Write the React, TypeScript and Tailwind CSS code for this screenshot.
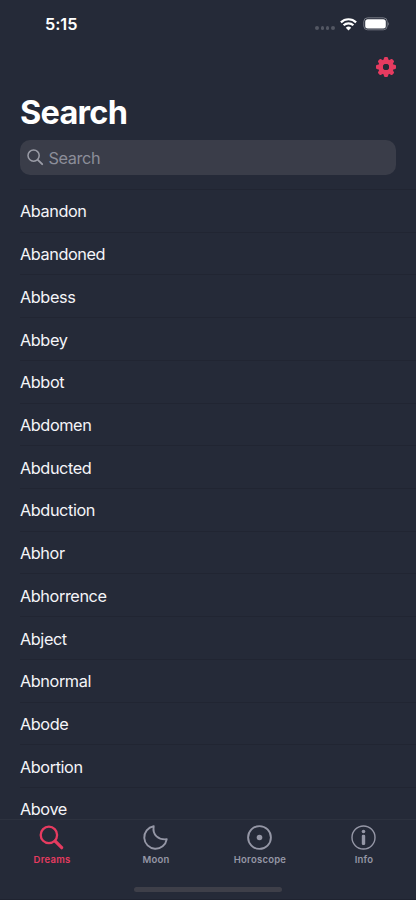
import React from "react";

const words = [
  "Abandon", "Abandoned", "Abbess", "Abbey", "Abbot", "Abdomen", "Abducted", "Abduction",
  "Abhor", "Abhorrence", "Abject", "Abnormal", "Abode", "Abortion", "Above",
];

function Gear() {
  return (
    <svg width="22" height="22" viewBox="-11 -11 22 22" fill="#e63b60">
      {[0, 45, 90, 135, 180, 225, 270, 315].map((a) => (
        <path key={a} transform={`rotate(${a})`} d="M-3 -6 L-1.9 -9.3 Q-1.7 -10 -1 -10 H1 Q1.7 -10 1.9 -9.3 L3 -6Z" />
      ))}
      <circle r="5.2" fill="none" stroke="#e63b60" strokeWidth="4.4" />
      <circle r="3" fill="#252a38" />
    </svg>
  );
}

function StatusBar() {
  return (
    <div className="flex h-12 shrink-0 items-center justify-between pl-[45px] pr-[26px]">
      <span className="text-[16.3px] font-semibold tracking-[-0.05px] text-white">5:15</span>
      <div className="flex items-center">
        <div className="mr-[5.5px] mt-2 flex gap-[1.6px]">
          {[0, 1, 2, 3].map((i) => (
            <i key={i} className="size-[3.6px] rounded-full bg-[#535763]" />
          ))}
        </div>
        <svg width="17" height="13" viewBox="0 0 17 13" fill="none" stroke="#fff" strokeWidth="2.2">
          <path d="M0.9 4.4 A10.8 10.8 0 0 1 16.1 4.4" />
          <path d="M3.6 7.3 A7 7 0 0 1 13.4 7.3" />
          <path d="M8.5 12.5 L5.8 9.8 A4 4 0 0 1 11.2 9.8Z" fill="#fff" stroke="none" />
        </svg>
        <svg className="ml-[6px]" width="27" height="14" viewBox="0 0 27 14">
          <rect x="0.8" y="0.8" width="23.4" height="12" rx="3.8" fill="none" stroke="#777b85" />
          <rect x="2.2" y="2.2" width="20.6" height="9.2" rx="2.5" fill="#fff" />
          <path d="M25.3 4.8 Q26.8 6.8 25.3 8.8Z" fill="#8b8e97" />
        </svg>
      </div>
    </div>
  );
}

function Tab({ label, active = false, children }: { label: string; active?: boolean; children: React.ReactNode }) {
  return (
    <div className={`flex flex-1 flex-col items-center ${active ? "text-[#e63b60]" : "text-[#9597a6]"}`}>
      <svg className="mr-[1px] mt-[4px]" width="28" height="28" viewBox="-13.5 -13.5 28 28" fill="none" stroke="currentColor" strokeWidth="1.9">
        {children}
      </svg>
      <span className="mt-[2px] text-[9.5px] font-semibold leading-[12px] tracking-[0.24px]">{label}</span>
    </div>
  );
}

export default function App() {
  return (
    <div className="flex h-[900px] w-[416px] flex-col overflow-hidden border-b border-[#1f2330] bg-[#252a38] font-[Inter,sans-serif]">
      <StatusBar />
      <div className="flex h-[38px] shrink-0 items-center justify-end pr-[19.5px]">
        <Gear />
      </div>
      <h1 className="h-[54px] shrink-0 pl-5 pt-[7px] text-[32.5px] font-bold leading-[40px] tracking-[-0.75px] text-white">Search</h1>
      <div className="mx-5 flex h-[35px] shrink-0 items-center rounded-[10px] bg-[#3a3d49] pl-[7px]">
        <svg width="17" height="17" viewBox="0 0 17 17" fill="none" stroke="#9a9ca6" strokeWidth="1.5" strokeLinecap="round">
          <circle cx="6.6" cy="6.6" r="5.6" />
          <path d="M10.8 10.8 L15.2 15.2" strokeWidth="1.9" />
        </svg>
        <span className="ml-[4.5px] text-[16.3px] leading-5 tracking-[-0.4px] text-[#8c8e99]">Search</span>
      </div>
      <ul className="mt-[14px] min-h-0 flex-1 overflow-hidden pl-5">
        {words.map((w) => (
          <li key={w} className="flex h-[42.72px] shrink-0 items-center border-t border-[#212532] pt-[1.5px] text-[16.3px] tracking-[-0.42px] text-[#f5f5f8]">
            {w}
          </li>
        ))}
      </ul>
      <nav className="flex h-[80px] shrink-0 flex-col border-t border-[#2d323f]">
        <div className="flex">
          <Tab label="Dreams" active>
            <circle cx="-2.6" cy="-2.6" r="8.2" strokeWidth="2.3" />
            <path d="M3.7 3.7 L10.2 10.2" strokeWidth="3.2" strokeLinecap="round" />
          </Tab>
          <Tab label="Moon">
            <path d="M-1.8 -11.2 A11.3 11.3 0 1 0 11.2 1.8 C3 2.6 -3.3 -2.5 -1.8 -11.2Z" strokeLinejoin="round" />
          </Tab>
          <Tab label="Horoscope">
            <circle r="11.4" />
            <circle r="2.8" fill="currentColor" stroke="none" />
          </Tab>
          <Tab label="Info">
            <circle r="11.5" strokeWidth="1.4" />
            <circle cy="-6" r="1.8" fill="currentColor" stroke="none" />
            <rect x="-1.7" y="-2.8" width="3.4" height="10.4" rx="1.4" fill="currentColor" stroke="none" />
          </Tab>
        </div>
        <div className="mx-auto mt-[21px] h-[5px] w-[148px] rounded-full bg-[#3e3f49]" />
      </nav>
    </div>
  );
}
